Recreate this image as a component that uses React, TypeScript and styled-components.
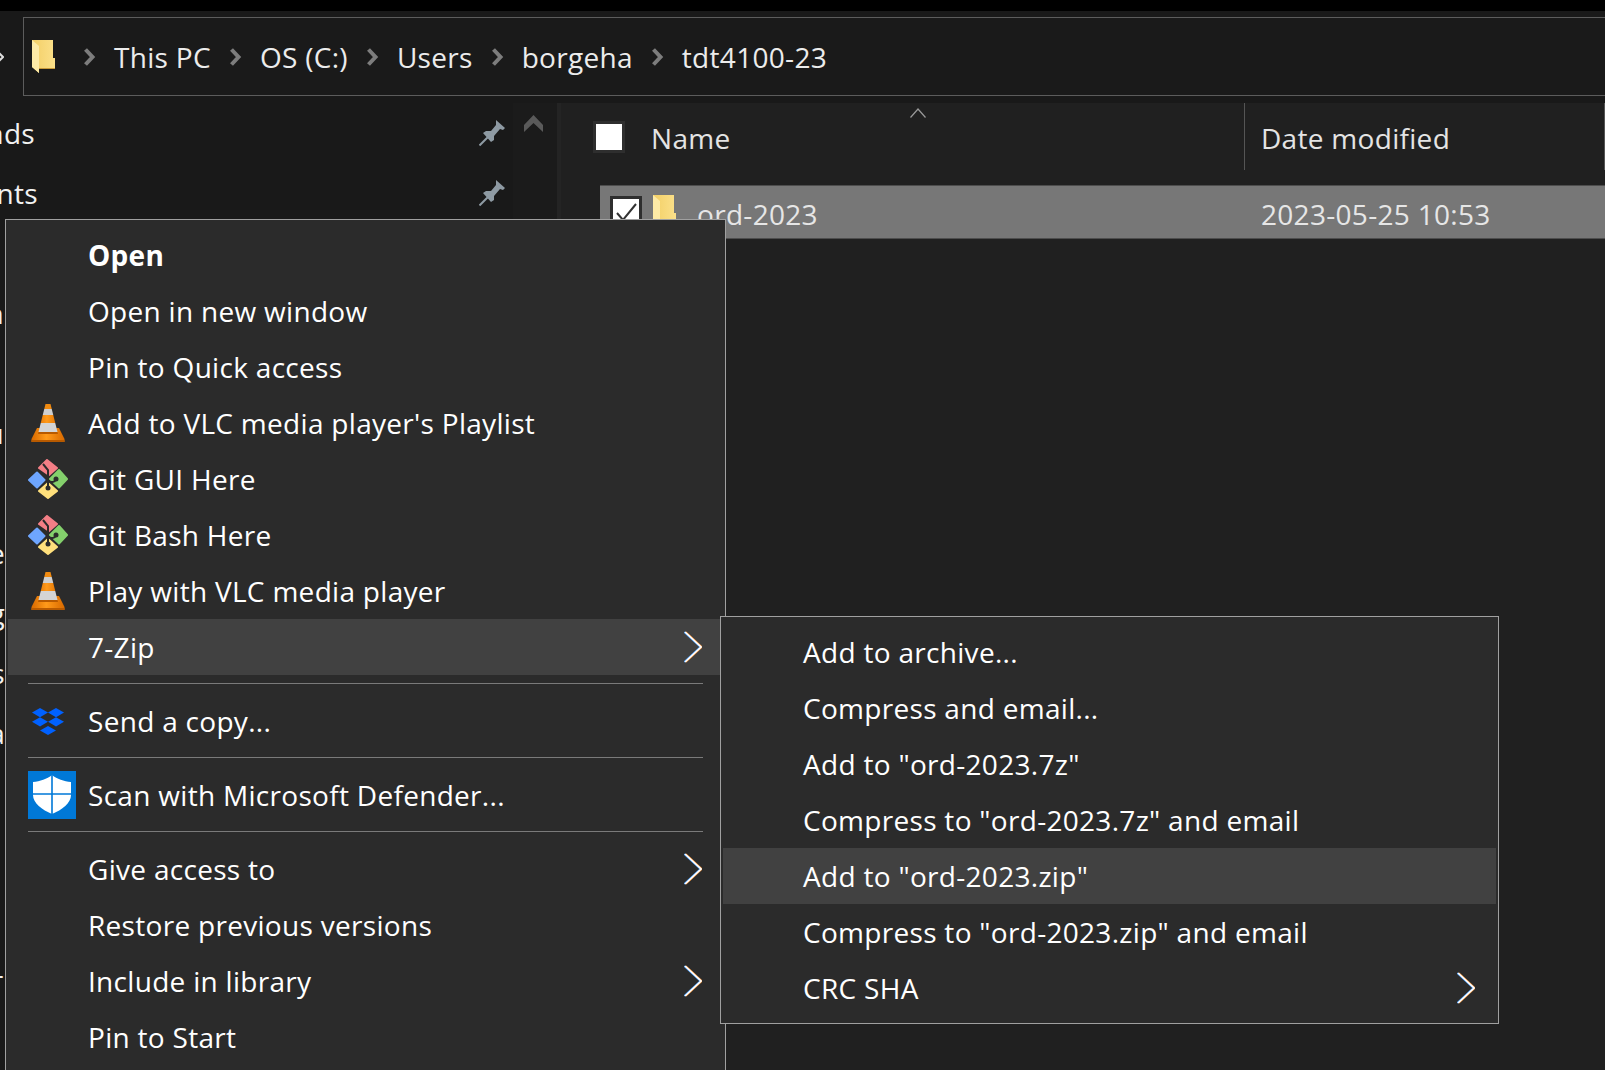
import styled, { createGlobalStyle } from "styled-components";
import { ReactNode } from "react";

const GlobalStyle = createGlobalStyle`
  html, body { margin: 0; padding: 0; background: #202020; }
  body { width: 1605px; height: 1070px; overflow: hidden; }
`;

const Page = styled.div`
  position: relative;
  width: 1605px;
  height: 1070px;
  overflow: hidden;
  display: flex;
  flex-direction: column;
  font-family: "Open Sans", "Noto Sans", sans-serif;
  font-size: 28px;
  letter-spacing: 0.3px;
  color: #f2f2f2;
`;

const TopEdge = styled.div`
  height: 11px;
  background: #000;
`;

const Toolbar = styled.div`
  height: 92px;
  box-sizing: border-box;
  padding: 6px 0 7px;
  display: flex;
  background: #191919;
`;

const BackStub = styled.div`
  width: 23px;
  display: flex;
  align-items: center;
`;

const AddressBar = styled.div`
  flex: 1;
  display: flex;
  align-items: center;
  gap: 18px;
  padding-left: 8px;
  border: 1px solid #5c5c5c;
  border-right: 0;
  background: #1a1a1a;
`;

const Crumb = styled.span`
  line-height: 1;
  color: #ececec;
`;

const FolderSlot = styled.span`
  display: flex;
  margin-right: 10px;
`;

const Body = styled.div`
  flex: 1;
  display: flex;
  min-height: 0;
`;

const NavPane = styled.div`
  width: 513px;
  background: #191919;
`;

const NavRow = styled.div`
  height: 60px;
  display: flex;
  align-items: center;
  justify-content: space-between;
  padding-right: 8px;
`;

const NavLabel = styled.span<{ $visible: number }>`
  width: ${(p) => p.$visible}px;
  display: flex;
  justify-content: flex-end;
  overflow: hidden;
  white-space: nowrap;
`;

const ScrollColumn = styled.div`
  width: 44px;
  box-sizing: border-box;
  padding: 12px 0 0 11px;
  background: #1b1b1b;
`;

const ScrollUp = styled.svg`
  display: block;
`;

const PaneDivider = styled.div`
  width: 4px;
  background: #242424;
`;

const Main = styled.div`
  flex: 1;
  min-width: 0;
  background: #202020;
`;

const Header = styled.div`
  height: 67px;
  display: flex;
  color: #e4e4e4;
`;

const NameHead = styled.div`
  position: relative;
  width: 684px;
  display: flex;
  align-items: center;
  gap: 26px;
  padding: 2px 0 0 32px;
  box-sizing: border-box;
  border-right: 1px solid #555;
`;

const HeadCheck = styled.div`
  margin-top: -2px;
  display: flex;
`;

const SortCaret = styled.svg`
  position: absolute;
  left: 349px;
  top: 5px;
`;

const DateHead = styled.div`
  width: 360px;
  box-sizing: border-box;
  display: flex;
  align-items: center;
  padding: 2px 0 0 16px;
  border-right: 1px solid #555;
`;

const Check = styled.div`
  width: 32px;
  height: 32px;
  box-sizing: border-box;
  background: #fff;
  border: 3px solid #2e2e2e;
  display: flex;
  align-items: center;
  justify-content: center;
  flex: none;
`;

const FileRow = styled.div`
  margin: 15px 0 0 39px;
  height: 54px;
  box-sizing: border-box;
  display: flex;
  align-items: center;
  background: #777;
  border-top: 1px solid #4d4d4d;
  border-bottom: 1px solid #4d4d4d;
  color: #e6e6e6;
`;

const FileName = styled.div`
  width: 661px;
  box-sizing: border-box;
  padding: 10px 0 0 10px;
  display: flex;
  align-items: flex-start;
  gap: 11px;
  align-self: stretch;
`;

const RowFolder = styled.span`
  display: flex;
  margin-top: -1px;
`;

const FileNameText = styled.span`
  margin: -1px 0 0 10px;
`;

const FileDate = styled.span`
  padding-top: 4px;
`;

const Menu = styled.div<{ $left: number; $top: number; $width: number }>`
  position: absolute;
  left: ${(p) => p.$left}px;
  top: ${(p) => p.$top}px;
  width: ${(p) => p.$width}px;
  box-sizing: border-box;
  padding: 7px 2px;
  background: #2b2b2b;
  border: 1px solid #a0a0a0;
  color: #fff;
`;

const MenuRow = styled.div<{ $active?: boolean; $bold?: boolean }>`
  height: 56px;
  display: flex;
  align-items: center;
  background: ${(p) => (p.$active ? "#414141" : "transparent")};
  font-weight: ${(p) => (p.$bold ? 700 : 400)};
`;

const IconSlot = styled.span`
  width: 80px;
  box-sizing: border-box;
  padding-left: 20px;
  display: flex;
  align-items: center;
  flex: none;
`;

const RowLabel = styled.span`
  flex: 1;
  white-space: nowrap;
`;

const Arrow = styled.svg`
  margin-right: 21px;
  flex: none;
`;

const Separator = styled.div`
  height: 1px;
  margin: 8px 20px 9px;
  background: #7a7a7a;
`;

const Chevron = () => (
  <Arrow width="18" height="32" viewBox="0 0 18 32" fill="none" strokeWidth="1.6">
    <polyline points="0.2,1 16.2,16 0.2,31" stroke="#4aa0ff" />
    <polyline points="1.8,1 17.8,16 1.8,31" stroke="#ff9a3c" />
    <polyline points="1,1 17,16 1,31" stroke="#fff" />
  </Arrow>
);

const CrumbArrow = () => (
  <svg width="13" height="18" viewBox="0 0 13 18" style={{ flex: "none" }}>
    <polyline points="2.5,1.5 9.5,9 2.5,16.5" fill="none" stroke="#7d7d7d" strokeWidth="4" />
  </svg>
);

const Folder = () => (
  <svg width="23" height="33" viewBox="0 0 23 33">
    <defs>
      <linearGradient id="folderBack" x1="0" x2="1" y1="0" y2="0">
        <stop offset="0" stopColor="#f3cf66" />
        <stop offset="1" stopColor="#fbe08a" />
      </linearGradient>
    </defs>
    <path d="M0 0H21V18H23V28H7V33L0 27Z" fill="url(#folderBack)" />
    <path d="M7 28H23V29H7Z" fill="#c99a3a" />
    <path d="M0 0L7 6V33L0 27Z" fill="#fdeaa6" />
  </svg>
);

const Pin = () => (
  <svg width="26" height="26" viewBox="0 0 26 26">
    <path d="M17 0L26 8L24 10L21 9L15 16L15 20L12 22L4 13L7 11L12 11L17 5Z" fill="#8e9aa3" />
    <line x1="0.5" y1="25.5" x2="9" y2="17" stroke="#8e9aa3" strokeWidth="2" />
  </svg>
);

const VlcIcon = ({ id }: { id: string }) => (
  <svg width="40" height="38" viewBox="0 0 40 38">
    <defs>
      <clipPath id={id}>
        <path d="M17.5 0H22.5L30 30H10Z" />
      </clipPath>
      <linearGradient id={`${id}-o`} x1="0" x2="1" y1="0" y2="0">
        <stop offset="0" stopColor="#d96a00" />
        <stop offset="0.45" stopColor="#ff9a1a" />
        <stop offset="1" stopColor="#d96a00" />
      </linearGradient>
    </defs>
    <path d="M9 24L3.5 35V38H36.5V35L31 24Z" fill={`url(#${id}-o)`} />
    <path d="M3.5 36H36.5V38H3.5Z" fill="#b85a00" />
    <g clipPath={`url(#${id})`}>
      <rect x="8" y="0" width="24" height="5" fill="#f08a10" />
      <rect x="8" y="5" width="24" height="6" fill="#cfcfcf" />
      <rect x="8" y="11" width="24" height="8" fill={`url(#${id}-o)`} />
      <rect x="8" y="19" width="24" height="9" fill="#d4d4d4" />
      <rect x="8" y="28" width="24" height="2" fill="#b85a00" />
    </g>
  </svg>
);

const GitIcon = () => (
  <svg width="40" height="40" viewBox="0 0 40 40">
    <g strokeLinejoin="round" strokeWidth="2">
      <path d="M1 21L9 13.5L16.5 21L9 28.5Z" fill="#6ea6ff" stroke="#6ea6ff" />
      <path d="M11 9L19 1L29 9L21 16Z" fill="#f47f86" stroke="#f47f86" />
      <path d="M22 20L31 11L39 20L31 28.5Z" fill="#84d06c" stroke="#84d06c" />
      <path d="M11 32L20 24L29 32L20 39Z" fill="#ffe07c" stroke="#ffe07c" />
    </g>
    <path d="M15 5L20 11V29M20 22C24 24 27 23 28 20" fill="none" stroke="#2b2b2b" strokeWidth="2" />
    <circle cx="20" cy="29" r="2.5" fill="#2b2b2b" />
    <circle cx="28" cy="20" r="2.5" fill="#2b2b2b" />
  </svg>
);

const DropboxIcon = () => (
  <svg width="40" height="27" viewBox="0 0 40 27" fill="#0061ff">
    <path d="M12 0L20 4.6L12 9.2L4 4.6Z" />
    <path d="M28 0L36 4.6L28 9.2L20 4.6Z" />
    <path d="M12 9.2L20 13.8L12 18.4L4 13.8Z" />
    <path d="M28 9.2L36 13.8L28 18.4L20 13.8Z" />
    <path d="M20 18L28 22.5L20 27L12 22.5Z" />
  </svg>
);

const DefenderIcon = () => (
  <svg width="48" height="48" viewBox="0 0 48 48">
    <rect width="48" height="48" fill="#0078d7" />
    <path d="M24 4C19 8 12 10.5 5 11V24C5 32 14 39 24 43C34 39 43 32 43 24V11C36 10.5 29 8 24 4Z" fill="#fff" />
    <path d="M24 3V44M4 23H44" stroke="#0078d7" strokeWidth="1.6" />
  </svg>
);

// the nav tree is mostly hidden by the menu, only these slivers show
const nav: { text: string; visible: number; pin?: boolean }[] = [
  { text: "Downloads", visible: 35, pin: true },
  { text: "Documents", visible: 38, pin: true },
  { text: "", visible: 0 },
  { text: "n", visible: 4 },
  { text: "", visible: 0 },
  { text: "u", visible: 4 },
  { text: "", visible: 0 },
  { text: "e", visible: 5 },
  { text: "g", visible: 5 },
  { text: "s", visible: 5 },
  { text: "a", visible: 5 },
  { text: "", visible: 0 },
  { text: "", visible: 0 },
  { text: "", visible: 0 },
  { text: "-", visible: 4 },
];

type Item = { label: string; icon?: ReactNode; bold?: boolean; active?: boolean; more?: boolean };

const Row = ({ label, icon, bold, active, more }: Item) => (
  <MenuRow $active={active} $bold={bold}>
    <IconSlot>{icon}</IconSlot>
    <RowLabel>{label}</RowLabel>
    {more && <Chevron />}
  </MenuRow>
);

const App = () => {
  return (
    <Page>
      <GlobalStyle />
      <TopEdge />
      <Toolbar>
        <BackStub>
          <svg width="4" height="10" viewBox="0 0 4 10">
            <polyline points="-2,0 3,5 -2,10" fill="none" stroke="#ddd" strokeWidth="2" />
          </svg>
        </BackStub>
        <AddressBar>
          <FolderSlot>
            <Folder />
          </FolderSlot>
          <CrumbArrow />
          <Crumb>This PC</Crumb>
          <CrumbArrow />
          <Crumb>OS (C:)</Crumb>
          <CrumbArrow />
          <Crumb>Users</Crumb>
          <CrumbArrow />
          <Crumb>borgeha</Crumb>
          <CrumbArrow />
          <Crumb>tdt4100-23</Crumb>
        </AddressBar>
      </Toolbar>
      <Body>
        <NavPane>
          {nav.map((n, i) => (
            <NavRow key={i}>
              <NavLabel $visible={n.visible}>{n.text}</NavLabel>
              {n.pin && <Pin />}
            </NavRow>
          ))}
        </NavPane>
        <ScrollColumn>
          <ScrollUp width="19" height="17" viewBox="0 0 19 17">
            <polygon points="9.5,0 19,10 19,17 9.5,8 0,17 0,10" fill="#5a5a5a" />
          </ScrollUp>
        </ScrollColumn>
        <PaneDivider />
        <Main>
          <Header>
            <NameHead>
              <HeadCheck>
                <Check />
              </HeadCheck>
              <span>Name</span>
              <SortCaret width="16" height="10" viewBox="0 0 16 10">
                <polyline points="0.5,9.5 8,1 15.5,9.5" fill="none" stroke="#9a9a9a" strokeWidth="1.2" />
              </SortCaret>
            </NameHead>
            <DateHead>Date modified</DateHead>
          </Header>
          <FileRow>
            <FileName>
              <Check>
                <svg width="26" height="26" viewBox="0 0 26 26">
                  <polyline points="4,14 10,21 23,5" fill="none" stroke="#333" strokeWidth="2" />
                </svg>
              </Check>
              <RowFolder>
                <Folder />
              </RowFolder>
              <FileNameText>ord-2023</FileNameText>
            </FileName>
            <FileDate>2023-05-25 10:53</FileDate>
          </FileRow>
        </Main>
      </Body>

      <Menu $left={5} $top={219} $width={721}>
        <Row label="Open" bold />
        <Row label="Open in new window" />
        <Row label="Pin to Quick access" />
        <Row label="Add to VLC media player's Playlist" icon={<VlcIcon id="vlc-a" />} />
        <Row label="Git GUI Here" icon={<GitIcon />} />
        <Row label="Git Bash Here" icon={<GitIcon />} />
        <Row label="Play with VLC media player" icon={<VlcIcon id="vlc-b" />} />
        <Row label="7-Zip" active more />
        <Separator />
        <Row label="Send a copy..." icon={<DropboxIcon />} />
        <Separator />
        <Row label="Scan with Microsoft Defender..." icon={<DefenderIcon />} />
        <Separator />
        <Row label="Give access to" more />
        <Row label="Restore previous versions" />
        <Row label="Include in library" more />
        <Row label="Pin to Start" />
      </Menu>

      <Menu $left={720} $top={616} $width={779}>
        <Row label="Add to archive..." />
        <Row label="Compress and email..." />
        <Row label={'Add to "ord-2023.7z"'} />
        <Row label={'Compress to "ord-2023.7z" and email'} />
        <Row label={'Add to "ord-2023.zip"'} active />
        <Row label={'Compress to "ord-2023.zip" and email'} />
        <Row label="CRC SHA" more />
      </Menu>
    </Page>
  );
};

export default App;
